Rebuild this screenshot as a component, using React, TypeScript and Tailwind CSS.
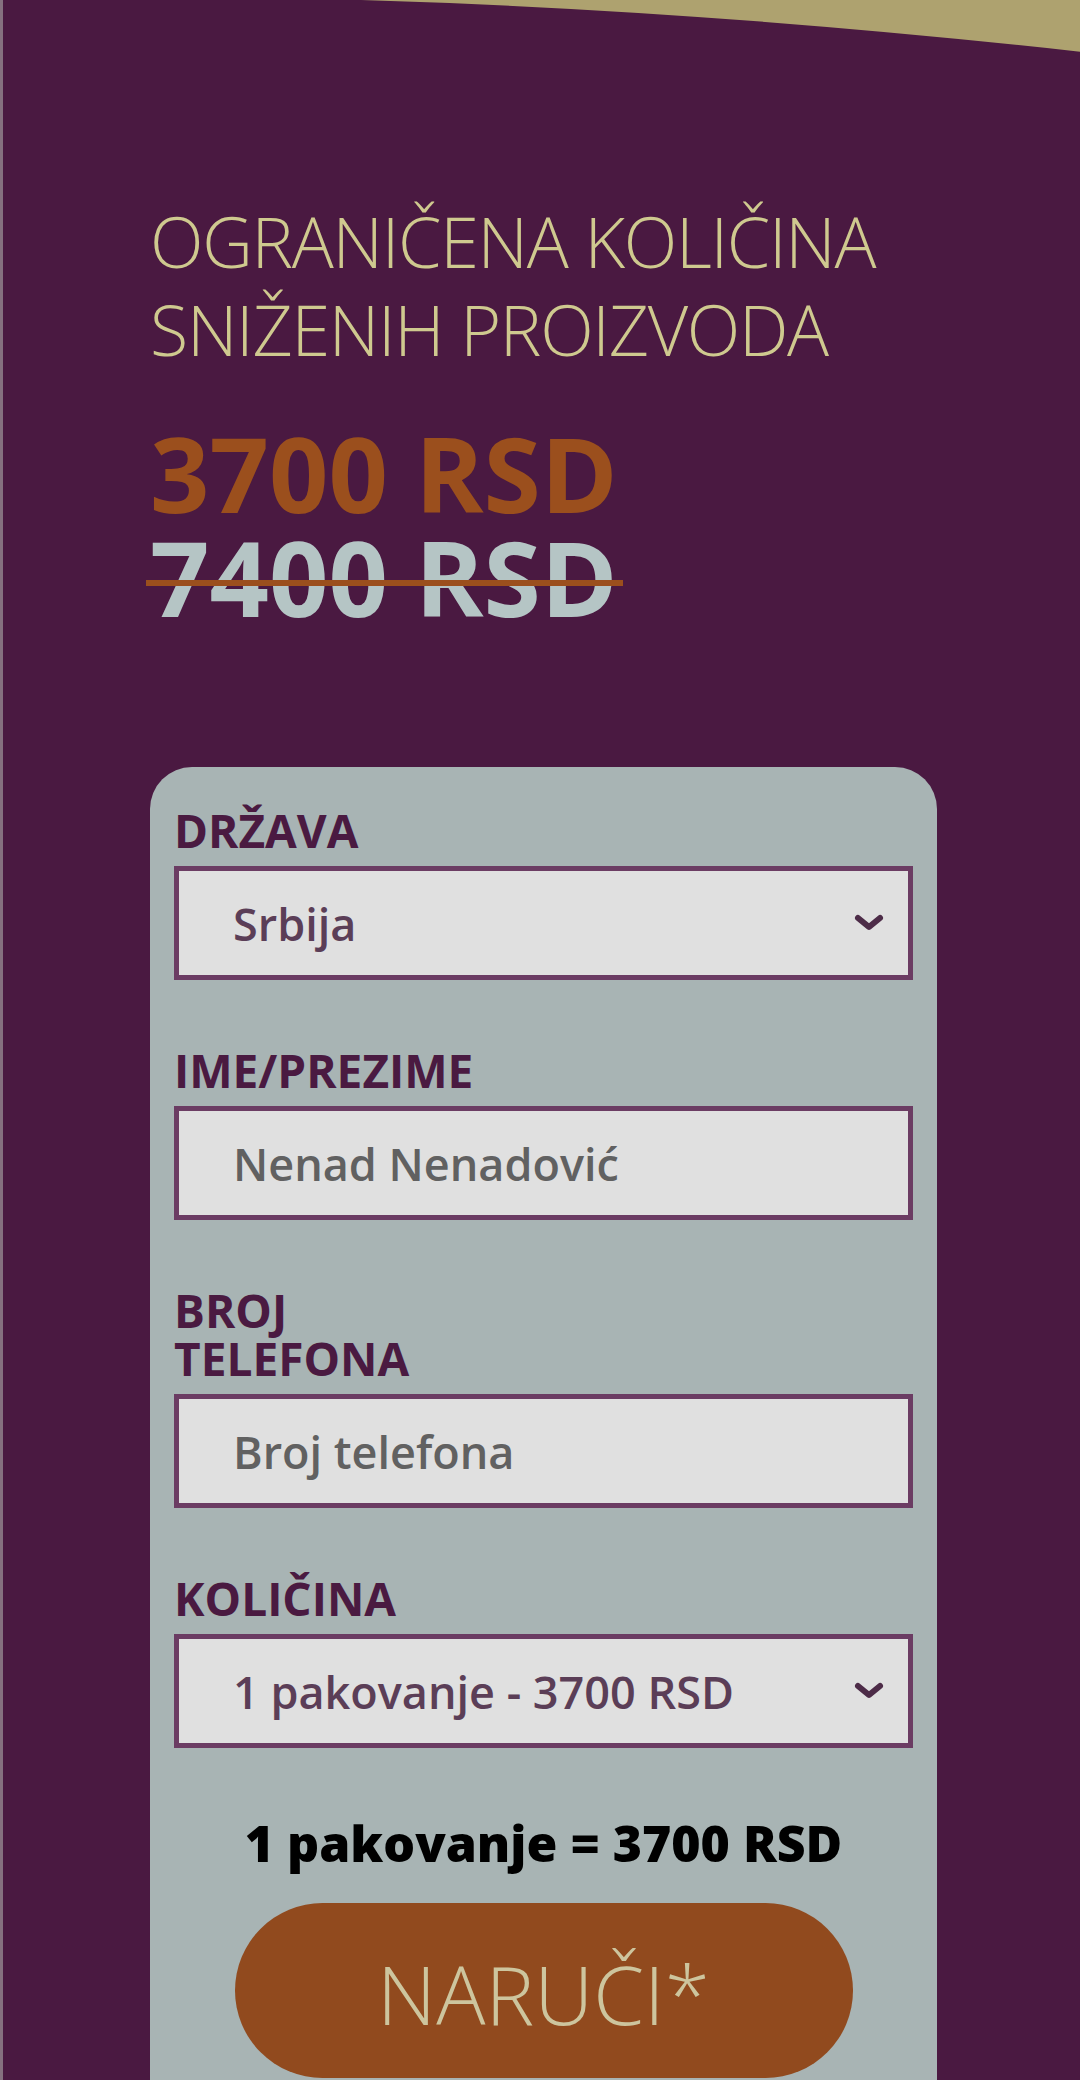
import React from "react";

function Chevron() {
  return (
    <svg width="30" height="18" viewBox="0 0 30 18" className="mr-[24px] shrink-0">
      <polyline points="4,4 15,13 26,4" fill="none" stroke="#4d2c48" strokeWidth="6" strokeLinecap="round" strokeLinejoin="round" />
    </svg>
  );
}

function Field({ label, value, muted, select }: { label: React.ReactNode; value: string; muted?: boolean; select?: boolean }) {
  return (
    <div>
      <div className="text-[46px] leading-[48px] font-bold text-[#4a1a41] mb-[12px]">{label}</div>
      <div className="h-[114px] border-[5px] border-[#6b3c63] bg-[#e0e0e0] flex items-center pl-[54px]">
        <span className={"flex-1 text-[45px] leading-none font-semibold " + (muted ? "text-[#616161]" : "text-[#5b3e57]")}>
          {value}
        </span>
        {select && <Chevron />}
      </div>
    </div>
  );
}

export default function App() {
  return (
    <div className="relative h-[2080px] overflow-hidden bg-[#4a1941] border-l-[3px] border-[#85707f] font-['Open_Sans',sans-serif]">
      <svg className="absolute top-0 left-0" width="1080" height="60" viewBox="0 0 1080 60">
        <path d="M358,0 Q700,10 1080,52 L1080,0 Z" fill="#aea26f" />
      </svg>

      <div className="pl-[147px] pt-[197px]">
        <h2 className="text-[70px] leading-[88px] font-light tracking-[-1.3px] text-[#cfc98f]">
          OGRANIČENA KOLIČINA
          <br />
          SNIŽENIH PROIZVODA
        </h2>

        <div className="mt-[48px] text-[104px] leading-[104px] font-bold">
          <div className="text-[#9b4f1d]">3700 RSD</div>
          <div className="relative inline-block text-[#b5c5c5]">
            7400 RSD
            <span className="absolute left-[-4px] right-[-5px] top-[55px] h-[6px] bg-[#9b4f1d]" />
          </div>
        </div>

        <div className="mt-[138px] w-[787px] rounded-t-[42px] bg-[#a8b4b4] px-[24px] pt-[39px] pb-[80px]">
          <div className="flex flex-col gap-[66px]">
            <Field label="DRŽAVA" value="Srbija" select />
            <Field label="IME/PREZIME" value="Nenad Nenadović" muted />
            <Field label={<>BROJ<br />TELEFONA</>} value="Broj telefona" muted />
            <Field label="KOLIČINA" value="1 pakovanje - 3700 RSD" select />
          </div>

          <p className="mt-[66px] text-center text-[50px] leading-[58px] font-extrabold text-black">
            1 pakovanje = 3700 RSD
          </p>

          <button className="mt-[31px] mx-auto flex items-center justify-center w-[618px] h-[175px] rounded-full bg-[#914a1e] text-[82px] font-light text-[#cdc59e] pt-[6px]">
            NARUČI*
          </button>
        </div>
      </div>
    </div>
  );
}
